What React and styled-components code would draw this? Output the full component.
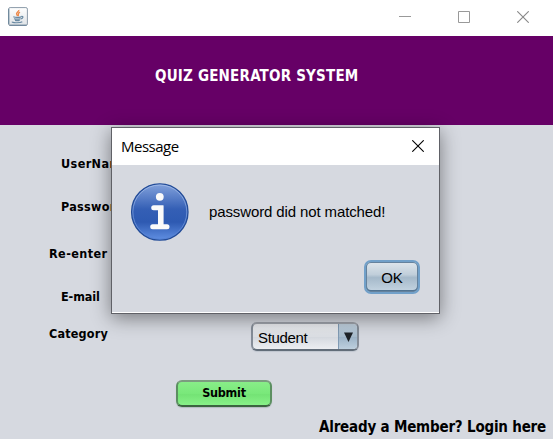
import React from "react";
import styled, { createGlobalStyle } from "styled-components";

const GlobalStyle = createGlobalStyle`
  * { box-sizing: border-box; }
  body { margin: 0; overflow: hidden; background: #d6d9e0; }
`;

const Window = styled.div`
  position: relative;
  width: 100vw;
  height: 439px;
  display: flex;
  flex-direction: column;
  overflow: hidden;
  background: #d6d9e0;
  color: #000;
`;

const TitleBar = styled.header`
  height: 36px;
  flex: none;
  display: flex;
  align-items: flex-start;
  justify-content: space-between;
  padding: 7px 24px 0 8px;
  background: #fff;
`;

const WindowControls = styled.div`
  display: flex;
  gap: 47px;
  padding-top: 4px;
`;

const Icon = styled.svg`
  display: block;
  flex: none;
`;

const Banner = styled.div`
  height: 89px;
  flex: none;
  padding: 30px 0 0 155px;
  background: #660066;
`;

const Tahoma = styled.span`
  display: block;
  white-space: nowrap;
  font-family: "DejaVu Sans Condensed", "DejaVu Sans", sans-serif;
  font-stretch: condensed;
  font-weight: bold;
  font-size: ${(p) => p.$size}px;
  line-height: 20px;
  letter-spacing: ${(p) => p.$spacing || 0}px;
  color: ${(p) => p.$color || "#000"};
`;

const Form = styled.main`
  flex: none;
  height: 292px;
  padding-top: 29px;
  display: grid;
  grid-template-rows: 43px 47px 43px 37px 1fr;
`;

const Row = styled.div`
  display: flex;
  align-items: flex-start;
  padding-left: ${(p) => p.$indent}px;
`;

const LabelCell = styled.div`
  width: 202px;
  flex: none;
`;

const Combo = styled.div`
  width: 108px;
  height: 29px;
  margin-top: -2px;
  display: flex;
  overflow: hidden;
  border: 2px solid #858d98;
  border-top-color: #a0a4ac;
  border-bottom-color: #626d79;
  border-radius: 6px;
  background: linear-gradient(#eceef1, #dcdfe4 50%, #d5d9df 52%, #eceef1);
  box-shadow: 0 1px 1px #bfc5cf;
`;

const ComboValue = styled.span`
  flex: 1;
  padding-left: 5px;
  font: 15px/27px "Liberation Sans", Arial, sans-serif;
  letter-spacing: -0.35px;
`;

const ComboArrow = styled.span`
  width: 20px;
  margin: -1px -1px -1px 0;
  display: flex;
  align-items: center;
  justify-content: center;
  border-left: 1px solid #809bb4;
  background: linear-gradient(#c4d3e0, #a8bdce 50%, #9db4c8 53%, #c0d2e0);
`;

const Submit = styled.button`
  width: 96px;
  height: 27px;
  margin: 29px 0 0 176px;
  padding: 0 0 1px;
  display: flex;
  align-items: center;
  justify-content: center;
  border: 2px solid #5c8f61;
  border-top-color: #7c9c80;
  border-bottom-color: #3c6440;
  border-radius: 6px;
  background: linear-gradient(#88ee88, #79e87a 50%, #74e375 55%, #88f188);
  box-shadow: 0 1px 1px #b3bac0;
`;

const Footer = styled.footer`
  height: 22px;
  padding-left: 319px;
`;

const Dialog = styled.section`
  position: absolute;
  left: 111px;
  top: 127px;
  width: 329px;
  height: 187px;
  display: flex;
  flex-direction: column;
  border: 1px solid #606167;
  background: #d6d9e0;
  box-shadow: 0 4px 18px rgba(0, 0, 0, 0.44);
`;

const DialogTitle = styled.div`
  height: 37px;
  flex: none;
  display: flex;
  align-items: flex-start;
  justify-content: space-between;
  padding: 12px 15px 0 9px;
  background: #fff;
`;

const Caption = styled.span`
  margin-top: -4px;
  font: 15px/20px "Open Sans", "Noto Sans", sans-serif;
  letter-spacing: -0.5px;
`;

const DialogBody = styled.div`
  flex: 1;
  padding: 17px 19px 0 18px;
  border-bottom: 1px solid #fff;
`;

const MessageRow = styled.div`
  display: flex;
  align-items: center;
  gap: 19px;
`;

const Message = styled.span`
  white-space: nowrap;
  font: 15px/20px "Liberation Sans", Arial, sans-serif;
  letter-spacing: -0.12px;
`;

const Actions = styled.div`
  display: flex;
  justify-content: flex-end;
  margin-top: 18px;
`;

const OkButton = styled.button`
  width: 56px;
  height: 34px;
  padding: 0;
  border: 2px solid #71a0c9;
  border-radius: 7px;
  background: linear-gradient(#dfe6ec, #c0ceda 42%, #a5b9ca 52%, #c5d5e2);
  box-shadow: inset 0 0 0 1px #65829d, inset 0 -1px 0 1px #507391;
  color: #000;
  font: 15px/29px "Liberation Sans", Arial, sans-serif;
`;

function JavaIcon() {
  return (
    <Icon width="20" height="19" viewBox="0 0 20 19" fill="none">
      <defs>
        <linearGradient id="cupTile" x2="0" y2="1">
          <stop stopColor="#fff" /><stop offset="1" stopColor="#dfe3e6" />
        </linearGradient>
      </defs>
      <rect x=".6" y=".6" width="18.8" height="17.8" rx="1.5" fill="url(#cupTile)" stroke="#8b9aa8" />
      <path d="M.8 17V2M1.5 18.2h17" stroke="#637f96" />
      <path d="M10.8 3c.4 2-3.5 2.5-2 4.7l.8 1.3M12 5.2C8.6 6.8 11.5 7.2 10 9.2" stroke="#ed8a4b" strokeWidth="1.4" />
      <path d="M5.3 9.7c2 .8 5.7.7 8 .1M6 11.7c2 .6 4.5.6 6.5 0M7 13.4c1.6.4 3.3.4 4.7 0M13.3 9.5c2.4-.6 2 2-.5 2.4M4.5 14.8c-1.8 1 7.5 1.5 9.8-.1" stroke="#6889a2" strokeWidth="1.2" />
    </Icon>
  );
}

function CrossIcon({ color }) {
  return (
    <Icon width="12" height="12" viewBox="0 0 12 12">
      <path d="M.3.3l11.4 11.4M11.7.3L.3 11.7" stroke={color} strokeWidth="1.1" />
    </Icon>
  );
}

function InfoIcon() {
  return (
    <Icon width="60" height="60" viewBox="0 0 60 60">
      <defs>
        <linearGradient id="infoFill" x2="0" y2="1">
          <stop stopColor="#83a2dc" />
          <stop offset=".45" stopColor="#345fb5" />
          <stop offset=".68" stopColor="#2e5ab2" />
          <stop offset="1" stopColor="#6190e3" />
        </linearGradient>
        <linearGradient id="infoRim" x2="0" y2="1">
          <stop stopColor="#a6bee9" /><stop offset="1" stopColor="#527fd2" />
        </linearGradient>
      </defs>
      <circle cx="29.8" cy="30" r="28.2" fill="url(#infoFill)" stroke="#234c98" strokeWidth="1.3" />
      <circle cx="29.8" cy="30" r="27" fill="none" stroke="url(#infoRim)" strokeWidth=".8" />
      <circle cx="29.8" cy="14.8" r="3.9" fill="#fafafa" />
      <path d="M23.7 25.8H31V44.8M22.7 44.8H37" fill="none" stroke="#fafafa" strokeWidth="5" strokeLinecap="round" />
      <path d="M28 24h5.2v20H28z" fill="#fafafa" />
    </Icon>
  );
}

function FieldLabel({ children, spacing = 0.18 }) {
  return <Tahoma $size={12.5} $spacing={spacing}>{children}</Tahoma>;
}

export default function App() {
  return (
    <>
      <GlobalStyle />
      <Window>
        <TitleBar>
          <JavaIcon />
          <WindowControls>
            <Icon width="12" height="12"><path d="M0 5.5h12" stroke="#999" /></Icon>
            <Icon width="12" height="12"><path d="M.5.5h11v11H.5z" fill="none" stroke="#999" /></Icon>
            <CrossIcon color="#888" />
          </WindowControls>
        </TitleBar>
        <Banner>
          <Tahoma $size={15} $spacing={0.2} $color="#fff">QUIZ GENERATOR SYSTEM</Tahoma>
        </Banner>
        <Form>
          <Row $indent={61}><FieldLabel spacing={0.4}>UserName</FieldLabel></Row>
          <Row $indent={61}><FieldLabel spacing={0.3}>Password</FieldLabel></Row>
          <Row $indent={49}><FieldLabel spacing={0.42}>Re-enter</FieldLabel></Row>
          <Row $indent={61}><FieldLabel spacing={-0.1}>E-mail</FieldLabel></Row>
          <div>
            <Row $indent={49}>
              <LabelCell><FieldLabel>Category</FieldLabel></LabelCell>
              <Combo>
                <ComboValue>Student</ComboValue>
                <ComboArrow>
                  <Icon width="9" height="10"><path d="M0 .5h9L4.5 10z" fill="#1d2227" /></Icon>
                </ComboArrow>
              </Combo>
            </Row>
            <Submit><Tahoma $size={12.5} $spacing={-0.25}>Submit</Tahoma></Submit>
          </div>
        </Form>
        <Footer>
          <Tahoma $size={15} $spacing={-0.2}>Already a Member? Login here</Tahoma>
        </Footer>
        <Dialog>
          <DialogTitle>
            <Caption>Message</Caption>
            <CrossIcon color="#000" />
          </DialogTitle>
          <DialogBody>
            <MessageRow>
              <InfoIcon />
              <Message>password did not matched!</Message>
            </MessageRow>
            <Actions><OkButton>OK</OkButton></Actions>
          </DialogBody>
        </Dialog>
      </Window>
    </>
  );
}
